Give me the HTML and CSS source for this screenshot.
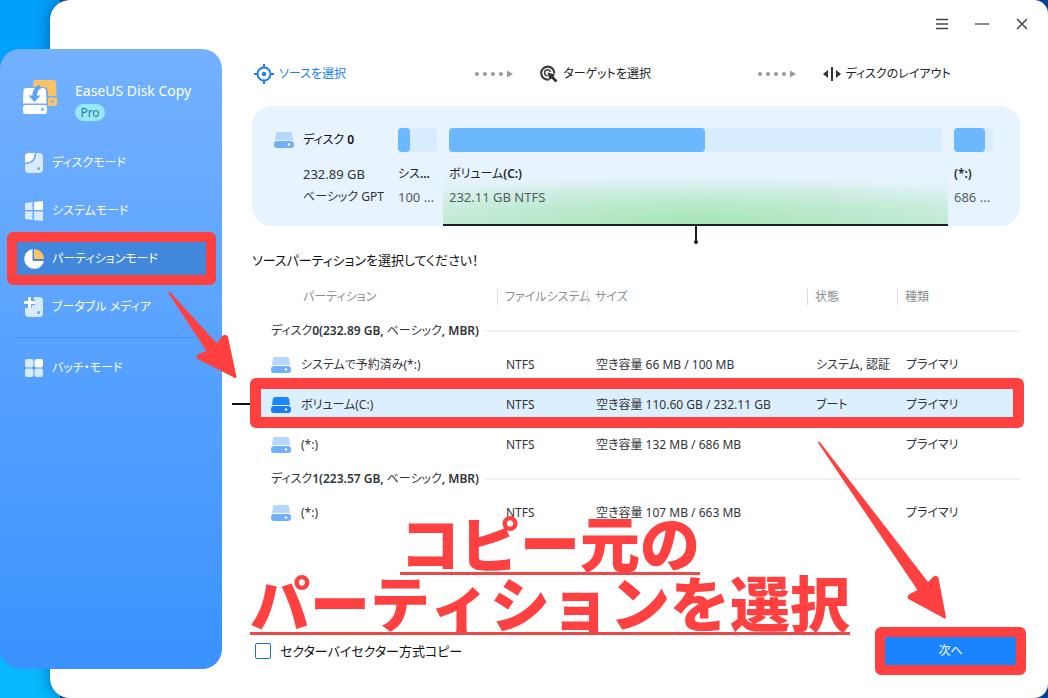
FILE: index.html
```html
<!DOCTYPE html>
<html lang="ja">
<head>
<meta charset="utf-8">
<meta name="viewport" content="width=device-width, initial-scale=1">
<title>EaseUS Disk Copy Pro</title>
<link rel="stylesheet" href="styles.css">
</head>
<body>
<svg class="defs" aria-hidden="true">
  <symbol id="drive" viewBox="0 0 20 16">
    <path class="drive-top" d="M4 0H16Q17.500 0 18 1.500L19 8H1L2 1.500Q2.500 0 4 0Z"/>
    <rect class="drive-base" x="0" y="9" width="20" height="7" rx="3"/>
    <circle cx="15" cy="12.500" r="1.200" fill="#fff"/>
  </symbol>
  <symbol id="dots" viewBox="0 0 38 8">
    <g fill="#999"><circle cx="2" cy="4" r="2"/><circle cx="10" cy="4" r="2"/><circle cx="18" cy="4" r="2"/><circle cx="26" cy="4" r="2"/><path d="M32 .5L38 4L32 7.500Z"/></g>
  </symbol>
</svg>
<div class="desktop">
  <main class="window">
    <header class="titlebar">
      <button class="win-btn" type="button" aria-label="メニュー"><svg width="14" height="12" viewBox="0 0 14 12"><path d="M1 1.500H13M1 6H13M1 10.500H13" stroke="#444" stroke-width="1.500"/></svg></button>
      <button class="win-btn" type="button" aria-label="最小化"><svg width="14" height="12" viewBox="0 0 14 12"><path d="M0 6H14" stroke="#666" stroke-width="1.500"/></svg></button>
      <button class="win-btn" type="button" aria-label="閉じる"><svg width="12" height="12" viewBox="0 0 12 12"><path d="M1 1L11 11M11 1L1 11" stroke="#444" stroke-width="1.500"/></svg></button>
    </header>
    <ol class="steps">
      <li class="step step-current">
        <svg width="20" height="20" viewBox="0 0 20 20"><g fill="none" stroke="#1a7cf0" stroke-width="2"><circle cx="10" cy="10" r="6.500"/><path d="M10 0V4M10 16V20M0 10H4M16 10H20"/></g><circle cx="10" cy="10" r="2.200" fill="#1a7cf0"/></svg>
        <span>ソースを選択</span>
        <svg class="step-dots" width="38" height="8"><use href="#dots"/></svg>
      </li>
      <li class="step">
        <svg width="18" height="18" viewBox="0 0 18 18"><g fill="none" stroke="#3c3c3c"><path d="M9 14.500A6.500 6.500 0 1 1 14.200 8.500" stroke-width="2.200"/><path d="M7.500 10.800A3 3 0 1 1 10.500 7" stroke-width="1.500"/></g><path d="M7.500 7.500L15 9.500L13.500 11.500L17.500 15.500L15.500 17.500L11.500 13.500L9.500 15Z" fill="#333"/></svg>
        <span>ターゲットを選択</span>
        <svg class="step-dots" width="38" height="8"><use href="#dots"/></svg>
      </li>
      <li class="step">
        <svg width="18" height="16" viewBox="0 0 18 16"><path d="M8 1H10V15H8ZM5 4V12L0 8ZM13 4V12L18 8Z" fill="#333"/></svg>
        <span>ディスクのレイアウト</span>
      </li>
    </ol>

    <section class="disk" aria-label="ディスク 0">
      <div class="disk-info">
        <svg class="drive" width="20" height="16"><use href="#drive"/></svg>
        <span class="disk-name">ディスク <b>0</b></span>
        <span class="disk-size">232.89 GB</span>
        <span class="disk-type">ベーシック GPT</span>
      </div>
      <div class="seg">
        <div class="bar"><div class="used" style="width:31%"></div></div>
        <span class="seg-name">シス<b>...</b></span>
        <span class="seg-size">100 ...</span>
      </div>
      <div class="seg seg-selected">
        <div class="bar"><div class="used" style="width:52%"></div></div>
        <span class="seg-name">ボリューム<b>(C:)</b></span>
        <span class="seg-size">232.11 GB NTFS</span>
        <svg class="pin" width="6" height="22" viewBox="0 0 6 22"><path d="M3 0V18" stroke="#1a1f22" stroke-width="2"/><path d="M0 0H6L3 3Z" fill="#1a1f22"/><circle cx="3" cy="18" r="2" fill="#1a1f22"/></svg>
      </div>
      <div class="seg">
        <div class="bar"><div class="used" style="width:80%"></div></div>
        <span class="seg-name"><b>(*:)</b></span>
        <span class="seg-size">686 ...</span>
      </div>
    </section>

    <p class="prompt">ソースパーティションを選択してください！</p>

    <table class="list">
      <thead>
        <tr><th class="c-part">パーティション</th><th class="c-fs">ファイルシステム</th><th class="c-size">サイズ</th><th class="c-state">状態</th><th class="c-type">種類</th></tr>
      </thead>
      <tbody>
        <tr class="group"><td colspan="5"><div class="group-title"><span>ディスク<b>0(232.89 GB,</b> ベーシック<b>, MBR)</b></span></div></td></tr>
        <tr><td><div class="part"><svg class="drive" width="20" height="16"><use href="#drive"/></svg>システムで予約済み(*:)</div></td><td>NTFS</td><td>空き容量 66 MB / 100 MB</td><td>システム, 認証</td><td>プライマリ</td></tr>
        <tr class="selected"><td><div class="part"><svg class="drive drive-on" width="20" height="16"><use href="#drive"/></svg>ボリューム(C:)</div></td><td>NTFS</td><td>空き容量 110.60 GB / 232.11 GB</td><td>ブート</td><td>プライマリ</td></tr>
        <tr><td><div class="part"><svg class="drive" width="20" height="16"><use href="#drive"/></svg>(*:)</div></td><td>NTFS</td><td>空き容量 132 MB / 686 MB</td><td></td><td>プライマリ</td></tr>
        <tr class="group"><td colspan="5"><div class="group-title"><span>ディスク<b>1(223.57 GB,</b> ベーシック<b>, MBR)</b></span></div></td></tr>
        <tr><td><div class="part"><svg class="drive" width="20" height="16"><use href="#drive"/></svg>(*:)</div></td><td>NTFS</td><td>空き容量 107 MB / 663 MB</td><td></td><td>プライマリ</td></tr>
      </tbody>
    </table>

    <footer class="actions">
      <label class="check"><input type="checkbox">セクターバイセクター方式コピー</label>
      <button class="next" type="button">次へ</button>
    </footer>
  </main>

  <aside class="sidebar">
    <div class="brand">
      <svg width="36" height="36" viewBox="0 0 36 36">
        <path d="M13 1H31Q34 1 34.200 4L34.500 17H26V12Q26 8 22 8H11L11.500 3Q11.700 1 13 1Z" fill="#fcc365"/>
        <path d="M26 18.500H35V24Q35 27 32 27H26Z" fill="#fcc365"/><circle cx="30.500" cy="22.500" r="1.300" fill="#6eaeff"/>
        <path d="M4 9H21Q23.500 9 23.800 12L24.500 24.500H1L1.500 12Q1.700 9 4 9Z" fill="#fff"/>
        <path d="M18 7.500Q12.500 10 12.500 18" fill="none" stroke="#5fa2f5" stroke-width="4.500"/>
        <path d="M6.500 16.500H18.500L12.500 23Z" fill="#5fa2f5"/>
        <rect x="1" y="26" width="24" height="9" rx="2.500" fill="#fff"/><circle cx="20.500" cy="30.500" r="1.400" fill="#6eaeff"/>
      </svg>
      <div class="brand-text"><h1 class="brand-name">EaseUS Disk Copy</h1><span class="badge">Pro</span></div>
    </div>
    <nav class="nav">
      <a class="nav-item" href="#disk"><svg width="20" height="20" viewBox="0 0 20 20"><rect x="1" y="0" width="18" height="20" rx="4" fill="#d8eaff"/><path d="M1 10V4Q1 0 5 0H11Q11 9 1 10Z" fill="#fff"/><path d="M11.500 0Q11.500 10 1 10.500" fill="none" stroke="#68acff" stroke-width="1.500"/><circle cx="14.500" cy="15.500" r="1.500" fill="#68acff"/></svg>ディスクモード</a>
      <a class="nav-item" href="#system"><svg width="20" height="20" viewBox="0 0 20 20"><path d="M1 2L8.500 1V9H1ZM1 10.500H8.500V19L1 18ZM10 10.500H19V20L10 19Z" fill="#d8eaff"/><path d="M10 1L19 0V9H10Z" fill="#fff"/></svg>システムモード</a>
      <a class="nav-item nav-active" href="#partition" aria-current="page"><svg width="20" height="20" viewBox="0 0 20 20"><path d="M8.500 0A10 10 0 1 0 20 12H10Q8.500 12 8.500 10.500Z" fill="#fff"/><path d="M10 0A10 10 0 0 1 20 10H11Q10 10 10 9Z" fill="#fcc365"/></svg>パーティションモード</a>
      <a class="nav-item" href="#bootable"><svg width="20" height="20" viewBox="0 0 20 20"><path d="M10 0H15Q19 0 19 4V16Q19 20 15 20H5Q1 20 1 16V11H4V7H8Z" fill="#d8eaff"/><path d="M5 0V11M0 5.500H11" stroke="#5ba4ff" stroke-width="5.500"/><path d="M5.500 1V10M1 5.500H10" stroke="#fff" stroke-width="3" stroke-linecap="round"/><circle cx="14.500" cy="15.500" r="1.500" fill="#5ba4ff"/></svg>ブータブル メディア</a>
      <hr class="nav-line">
      <a class="nav-item" href="#batch"><svg width="20" height="20" viewBox="0 0 20 20"><g fill="#d8eaff"><rect x="1" y="1" width="8.500" height="8.500" rx="2"/><rect x="1" y="10.500" width="8.500" height="8.500" rx="2"/><rect x="10.500" y="10.500" width="8.500" height="8.500" rx="2"/></g><rect x="10.500" y="1" width="8.500" height="8.500" rx="2" fill="#fff"/></svg>バッチ・モード</a>
    </nav>
  </aside>

  <svg class="arrows" width="1048" height="698" viewBox="0 0 1048 698" aria-hidden="true">
    <g fill="#ff4040" stroke="#ff4040" stroke-width="2" stroke-linejoin="round">
      <path d="M169.500 293L217 345L223 336.500Q225.500 335 227 337L235.500 377L198 358Q197 356 199 355L208 351.500Z"/>
      <path d="M819 442.500L928 583.500L934 577.500Q936 576 937.500 578L945 617.500L909 598Q908 596 910 595L919 590.500Z"/>
    </g>
  </svg>
  <p class="callout"><span>コピー元の</span><span>パーティションを選択</span></p>
</div>
</body>
</html>
```
FILE: styles.css
```css
* { box-sizing: border-box; }

body {
  margin: 0;
  font-family: "Noto Sans", "Noto Sans CJK JP", sans-serif;
  font-feature-settings: "palt";
  font-size: 12px;
  line-height: 20px;
  color: #30343a;
}

b { font-weight: 600; }

.defs { display: none; }

.desktop {
  position: relative;
  display: grid;
  grid-template-columns: 50px 172px 1fr;
  min-height: 100vh;
  background: linear-gradient(#009ffa, #06b9fc) left / 60px 100% no-repeat, #0043a8;
}

.window {
  grid-area: 1 / 2 / 2 / 4;
  display: flex;
  flex-direction: column;
  padding: 0 28px 0 202px;
  background: #fff;
  border-radius: 20px 14px 14px 20px;
  box-shadow: 0 0 14px rgba(0, 40, 90, 0.5);
}

/* Title bar */
.titlebar {
  display: flex;
  justify-content: flex-end;
  align-items: center;
  height: 48px;
  margin-right: -22px;
}
.win-btn {
  display: grid;
  place-items: center;
  width: 40px;
  height: 32px;
  padding: 0;
  border: 0;
  background: none;
}

/* Wizard steps */
.steps {
  display: grid;
  grid-template-columns: 287fr 283fr 198fr;
  margin: 0;
  padding: 12px 0 0 2px;
  list-style: none;
}
.step {
  display: flex;
  align-items: center;
  gap: 5px;
  height: 28px;
  color: #222;
  white-space: nowrap;
}
.step-current { color: #1a7cf0; }
.step-dots { margin: 0 27px 0 auto; }

/* Disk map */
.disk {
  display: grid;
  grid-template-columns: 140px 51px 1fr 51px;
  height: 120px;
  margin-top: 18px;
  padding-right: 21px;
  background: #e7f3fe;
  border-radius: 20px;
}
.disk-info {
  display: grid;
  grid-template-columns: 20px 1fr;
  grid-template-rows: 24px 32px 23px;
  align-items: end;
  align-content: start;
  column-gap: 9px;
  padding: 22px 0 0 22px;
  white-space: nowrap;
}
.disk-info .drive { align-self: center; }
.disk-name { align-self: center; color: #111; }
.disk-size, .disk-type { grid-column: 2; }
.disk-size { font-size: 13px; }
.drive {
  --top: #b5d7fd;
  --base: #70b0fb;
  flex: none;
}
.drive-on {
  --top: #1a86ff;
  --base: #1a7df5;
}
.drive-top { fill: var(--top); }
.drive-base { fill: var(--base); }

.seg {
  position: relative;
  display: flex;
  flex-direction: column;
  gap: 3px;
  min-width: 0;
  padding: 22px 6px 0;
  white-space: nowrap;
}
.seg-selected {
  border-bottom: 2px solid #1a1f22;
  background: radial-gradient(ellipse 75% 48px at 50% 100%, #a6e5b5, rgba(180, 232, 196, 0.7) 50%, transparent) no-repeat, linear-gradient(transparent 60%, #cdeee4);
}
.bar {
  height: 24px;
  margin-bottom: 9px;
  background: #d8ecff;
  border-radius: 4px;
}
.used {
  height: 100%;
  background: #6cb8ff;
  border-radius: 4px;
}
.seg-name { color: #1c2228; }
.seg-size { font-size: 13px; color: #50605f; }
.pin {
  position: absolute;
  top: 100%;
  left: 50%;
  margin-left: -3px;
}

.prompt {
  margin: 24px 0 0;
  font-size: 13px;
  color: #111;
}

/* Partition list */
.list {
  width: 100%;
  margin-top: 7px;
  border-collapse: collapse;
  table-layout: fixed;
  white-space: nowrap;
}
.list th {
  position: relative;
  height: 40px;
  padding: 0 0 0 8px;
  font-weight: 400;
  text-align: left;
  color: #8b8f94;
}
.list th + th::before {
  content: "";
  position: absolute;
  top: 12px;
  left: 0;
  height: 16px;
  border-left: 1px solid #dcdfe2;
}
.list .c-part { width: 245px; padding-left: 51px; }
.c-fs { width: 90px; }
.c-state { width: 90px; }
.c-type { width: 123px; }
.list td {
  height: 40px;
  padding: 0 0 0 9px;
}
.list .group td { height: 28px; padding-left: 19px; }
.group-title {
  display: flex;
  align-items: center;
  gap: 6px;
}
.group-title::after {
  content: "";
  flex: 1;
  border-top: 2px solid #f1f2f4;
}
.part {
  display: flex;
  align-items: center;
  gap: 10px;
  padding-left: 10px;
}
.selected { position: relative; background: #dceffe; }
.selected td:first-child::before {
  content: "";
  position: absolute;
  top: 18px;
  left: -20px;
  width: 20px;
  height: 2px;
  background: #111;
}
.selected td:first-child::after,
.nav-active::after,
.next::after {
  content: "";
  position: absolute;
  border: 10px solid #ff4040;
  border-radius: 6px;
}
.selected td:first-child::after {
  inset: -7px -4px -3px -2px;
  border-width: 11px;
}

/* Footer */
.actions {
  display: flex;
  justify-content: space-between;
  align-items: center;
  margin: auto 0 29px;
}
.check {
  display: flex;
  align-items: center;
  gap: 9px;
  padding-left: 3px;
  font-size: 13px;
  color: #111;
}
.check input {
  appearance: none;
  width: 16px;
  height: 16px;
  margin: 0;
  border: 1px solid #1f74c9;
  border-radius: 2px;
}
.next {
  position: relative;
  width: 139px;
  height: 36px;
  padding: 0;
  border: 0;
  background: #1a84ff;
  font: inherit;
  color: #fff;
}
.next::after { inset: -6px; }

/* Sidebar */
.sidebar {
  position: relative;
  grid-area: 1 / 1 / 2 / 3;
  margin: 49px 0 29px;
  padding-top: 30px;
  background: linear-gradient(#73b1ff, #3a92ff);
  border-radius: 20px;
}
.brand {
  display: flex;
  gap: 17px;
  padding-left: 22px;
}
.brand-name {
  margin: 0;
  font-size: 14px;
  font-weight: 400;
  line-height: 24px;
  color: #fff;
}
.badge {
  display: block;
  width: 30px;
  margin-top: 1px;
  background: #98e8fc;
  border-radius: 9px;
  line-height: 17px;
  text-align: center;
  color: #2a7896;
}
.nav {
  display: flex;
  flex-direction: column;
  gap: 14px;
  margin-top: 25px;
  padding: 0 16px;
}
.nav-item {
  position: relative;
  display: flex;
  align-items: center;
  gap: 8px;
  height: 34px;
  padding-left: 8px;
  color: #fff;
  text-decoration: none;
}
.nav-active { background: #4187dc; }
.nav-active::after { inset: -10px -10px -9px -9px; }
.nav-line {
  width: 100%;
  margin: -1px 0;
  border: 0;
  border-top: 1px solid #4795f0;
}

/* Annotations over the window */
.arrows {
  position: absolute;
  top: 0;
  left: 0;
  pointer-events: none;
}
.callout {
  position: absolute;
  top: 515px;
  left: 250px;
  display: flex;
  flex-direction: column;
  align-items: center;
  margin: 0;
  font-family: "Noto Sans CJK JP", sans-serif;
  font-feature-settings: normal;
  font-kerning: none;
  font-size: 60px;
  font-weight: 900;
  line-height: 51px;
  color: #ff4040;
  white-space: nowrap;
  pointer-events: none;
}
.callout span {
  padding-bottom: 6px;
  border-bottom: 3px solid #ea4a4a;
}
```
